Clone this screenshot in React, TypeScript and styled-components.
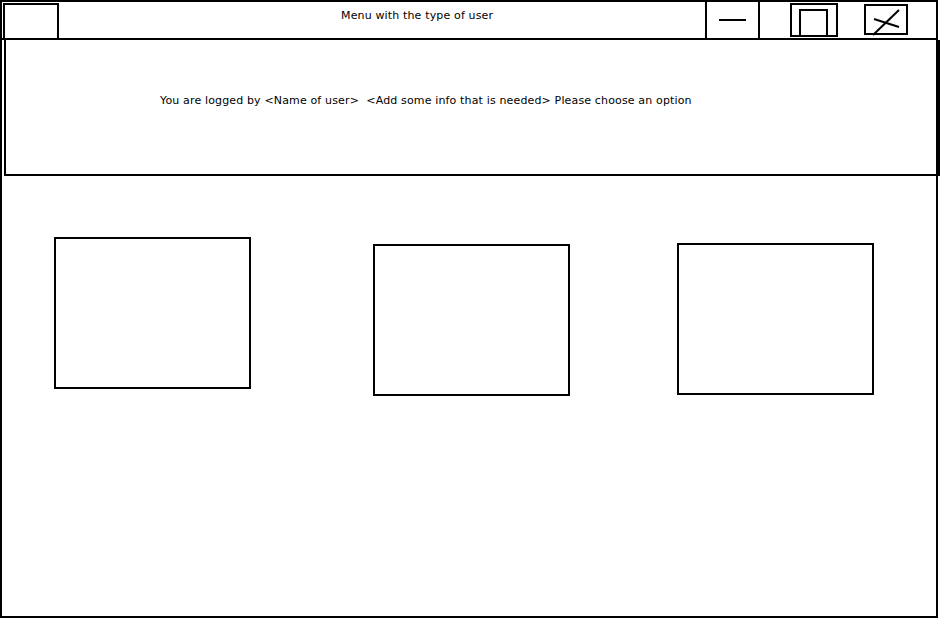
import styled, { createGlobalStyle } from "styled-components";

const GlobalStyle = createGlobalStyle`
	html, body {
		margin: 0;
		padding: 0;
		background: #FFFFFF;
	}

	body {
		font-family: 'DejaVu Sans', 'Liberation Sans', sans-serif;
		color: #000000;
	}
`;

const Window = styled.div`
	box-sizing: border-box;
	display: flex;
	flex-direction: column;
	width: 938px;
	height: 618px;
	border: 2px solid #000000;
	background: #FFFFFF;
`;

const TitleBar = styled.div`
	display: flex;
	align-items: flex-start;
	height: 36px;
	border-bottom: 2px solid #000000;
`;

const AppBox = styled.div`
	box-sizing: border-box;
	width: 56px;
	height: 35px;
	margin: 1px 0px 0px 1px;
	border: 2px solid #000000;
	border-bottom: none;
`;

const Title = styled.span`
	box-sizing: border-box;
	width: 646px;
	font-size: 11px;
	letter-spacing: 0.15px;
	line-height: 13px;
	padding: 7px 0px 0px 282px;
	white-space: nowrap;
`;

const MinimizeButton = styled.div`
	box-sizing: border-box;
	display: flex;
	align-items: center;
	justify-content: center;
	width: 55px;
	height: 36px;
	border-left: 2px solid #000000;
	border-right: 2px solid #000000;

	&::before {
		content: "";
		width: 27px;
		height: 2px;
		background: #000000;
	}
`;

const MaximizeButton = styled.div`
	box-sizing: border-box;
	display: flex;
	align-items: flex-end;
	justify-content: center;
	width: 48px;
	height: 34px;
	margin: 1px 0px 0px 30px;
	border: 2px solid #000000;
	padding-right: 2px;

	>span {
		box-sizing: border-box;
		width: 29px;
		height: 28px;
		border: 2px solid #000000;
		margin-bottom: -2px;
	}
`;

const CloseButton = styled.div`
	box-sizing: border-box;
	position: relative;
	width: 44px;
	height: 31px;
	margin: 2px 0px 0px 26px;
	border: 2px solid #000000;

	>svg {
		position: absolute;
		left: -2px;
		top: -2px;
		overflow: visible;
	}
`;

const Header = styled.header`
	box-sizing: border-box;
	height: 136px;
	margin: 0px -4px 0px 2px;
	border: 2px solid #000000;
	border-top: none;
	padding: 54px 0px 0px 154px;
	font-size: 11px;
	letter-spacing: 0.15px;
	line-height: 13px;
	white-space: pre;
`;

const Options = styled.div`
	display: flex;
	align-items: flex-start;
	padding-left: 52px;
`;

const OptionCard = styled.div<{ $top: number; $left: number }>`
	box-sizing: border-box;
	width: 197px;
	height: 152px;
	margin: ${p => p.$top}px 0px 0px ${p => p.$left}px;
	border: 2px solid #000000;
`;

export default function App() {
	return (
		<>
			<GlobalStyle />
			<Window>
				<TitleBar>
					<AppBox />
					<Title>Menu with the type of user</Title>
					<MinimizeButton />
					<MaximizeButton>
						<span />
					</MaximizeButton>
					<CloseButton>
						<svg width="44" height="31" viewBox="0 0 44 31">
							<line x1="9" y1="31" x2="35" y2="6" stroke="#000" strokeWidth="2" />
							<line x1="10" y1="15" x2="35" y2="23" stroke="#000" strokeWidth="2" />
						</svg>
					</CloseButton>
				</TitleBar>
				<Header>{"You are logged by <Name of user>  <Add some info that is needed> Please choose an option"}</Header>
				<Options>
					<OptionCard $top={61} $left={0} />
					<OptionCard $top={68} $left={122} />
					<OptionCard $top={67} $left={107} />
				</Options>
			</Window>
		</>
	);
}
